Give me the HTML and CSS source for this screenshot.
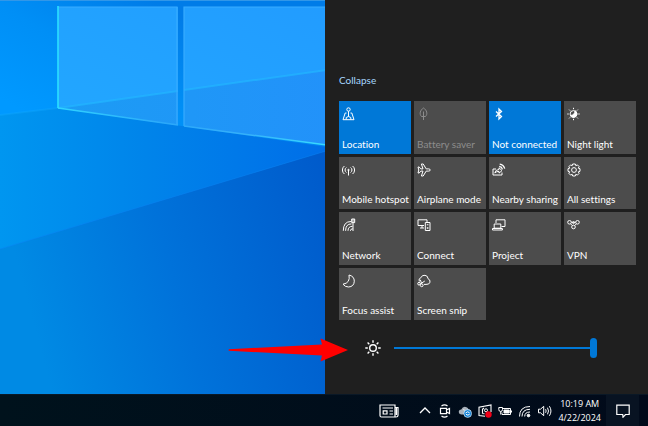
FILE: index.html
```html
<!DOCTYPE html>
<html lang="en">
<head>
<meta charset="utf-8">
<meta name="viewport" content="width=device-width, initial-scale=1">
<title>Action center</title>
<link rel="stylesheet" href="styles.css">
</head>
<body>
<main class="desktop">
  <div class="wallpaper">
    <svg class="wallpaper-art" viewBox="0 0 326 394" preserveAspectRatio="xMinYMin slice" aria-hidden="true">
      <defs>
        <linearGradient id="sky" gradientUnits="userSpaceOnUse" x1="20" y1="110" x2="100" y2="-30"><stop offset="0" stop-color="#0099ff"/><stop offset=".5" stop-color="#008ff6"/><stop offset="1" stop-color="#007ce8"/></linearGradient>
        <linearGradient id="beam" x1="0" y1="0" x2="1" y2="0"><stop offset="0" stop-color="#0096f0"/><stop offset=".45" stop-color="#0084ea"/><stop offset="1" stop-color="#006ee8"/></linearGradient>
        <linearGradient id="floor" x1="0" y1=".2" x2="1" y2="0"><stop offset="0" stop-color="#008ae4"/><stop offset=".45" stop-color="#0072da"/><stop offset="1" stop-color="#005acb"/></linearGradient>
        <linearGradient id="pane" x1="0" y1="1" x2="1" y2="0"><stop offset="0" stop-color="#22a8ff"/><stop offset="1" stop-color="#229cff"/></linearGradient>
        <linearGradient id="low" gradientUnits="userSpaceOnUse" x1="58" y1="0" x2="326" y2="0"><stop offset="0" stop-color="#1c9cf4"/><stop offset="1" stop-color="#2292fa"/></linearGradient>
        <linearGradient id="edge" gradientUnits="userSpaceOnUse" x1="58" y1="0" x2="326" y2="0"><stop offset="0" stop-color="#30d4ff"/><stop offset=".4" stop-color="#2ba8fa"/><stop offset=".7" stop-color="#36b0fa"/><stop offset="1" stop-color="#38dcff"/></linearGradient>
      </defs>
      <path d="M0 0H326V150H0Z" fill="url(#sky)"/>
      <path d="M0 115L58 108L326 147V394H0Z" fill="url(#beam)"/>
      <path d="M0 249L326 151V394H0Z" fill="url(#floor)"/>
      <path d="M0 249L326 151" stroke="#0a86f5" stroke-opacity=".5"/>
      <path d="M0 115L58 108" stroke="#10a8ff" stroke-opacity=".35" stroke-width="2"/>
      <path d="M58 7H178V125L58 108ZM184 7H326V145L184 126Z" fill="url(#pane)"/>
      <path d="M58 108L178 91V125ZM184 90L326 70V145L184 126Z" fill="url(#low)"/>
      <path d="M58 108L178 91M184 90L326 70" stroke="#22b5ff" stroke-width="2" stroke-opacity=".7"/>
      <path d="M58 7H177V125M326 7H184V126" fill="none" stroke="#38acff" stroke-width="1.2"/>
      <path d="M58 108L178 125M184 126L326 145" stroke="url(#edge)" stroke-width="1.5"/>
      <path d="M58 6V108" stroke="#2be0ff" stroke-width="1.6"/>
      <path d="M0 .5H326" stroke="#3297e8"/>
    </svg>
  </div>
  <aside class="panel" aria-label="Action center">
    <a class="collapse" href="#tiles">Collapse</a>
    <div class="tiles" id="tiles">
      <button class="tile on"><svg class="icon" viewBox="0 0 14 14"><circle cx="6.500" cy="2.500" r="1.700"/><path d="M6.500 4.200V9.500M4.500 6H3.200L1 12.700H12L9.800 6H8.500M4.200 12.500V10.500Q6.500 8.500 8.800 10.500V12.500"/></svg><span>Location</span></button>
      <button class="tile" disabled><svg class="icon" viewBox="0 0 14 14"><path d="M6.500 1C3.200 3 2 7 4.500 9.500H8.500C11 7 9.800 3 6.500 1ZM6.500 4.500V13"/></svg><span>Battery saver</span></button>
      <button class="tile on"><svg class="icon" viewBox="0 0 14 14"><path d="M4 4.400L9.500 9.500L7 12V2L9.500 4.500L4 9.600" stroke-width="1.300"/></svg><span>Not connected</span></button>
      <button class="tile"><svg class="icon" viewBox="0 0 14 14"><circle cx="6.500" cy="7" r="3.400"/><path d="M8 3.800A3.400 3.400 0 1 1 3.500 8.500Q8 8 8 3.800" fill="currentColor"/><path d="M6.500 .8V2.200M6.500 11.800V13.200M.3 7H1.700M11.300 7H12.700M2.100 2.600L3.100 3.600M9.900 10.400L10.900 11.400M2.100 11.400L3.100 10.400M9.900 3.600L10.900 2.600"/></svg><span>Night light</span></button>
      <button class="tile"><svg class="icon" viewBox="0 0 14 14"><path d="M6.500 6.500V12.500M4.400 9.500A3 3 0 0 1 4.400 4.500M8.600 9.500A3 3 0 0 0 8.600 4.500M2.400 11A5 5 0 0 1 2.400 3M10.600 11A5 5 0 0 0 10.600 3"/><circle cx="6.500" cy="7" r=".7"/></svg><span>Mobile hotspot</span></button>
      <button class="tile"><svg class="icon" viewBox="0 0 14 14"><path d="M1 4H2.200L3.800 5.900H6L4.400 1H6.200L9.200 5.900H11.700Q13.200 5.900 13.200 7T11.700 8.100H9.200L6.200 13H4.400L6 8.100H3.800L2.200 10H1L1.800 7Z"/></svg><span>Airplane mode</span></button>
      <button class="tile"><svg class="icon" viewBox="0 0 14 14"><path d="M4 6H1V12H10V9.500M2.800 10Q3.500 6.500 7 6.500V4.800L10 7.600L7 10.100V8.400Q4.500 8.300 2.800 10"/><path d="M7.200 3.300Q9.800 3.700 10.500 6.300M7.700 1.200Q11.600 1.700 12.700 5.700" stroke-width="1.300"/></svg><span>Nearby sharing</span></button>
      <button class="tile"><svg class="icon" viewBox="0 0 14 14"><path d="M5.700 1H8.300L8.800 2.700L10.400 1.900L12.100 3.600L11.300 5.200L13 5.700V8.300L11.300 8.800L12.100 10.400L10.400 12.100L8.800 11.300L8.300 13H5.700L5.200 11.300L3.600 12.100L1.900 10.400L2.700 8.800L1 8.300V5.700L2.700 5.200L1.900 3.600L3.600 1.900L5.200 2.700Z"/><circle cx="7" cy="7" r="2.400"/></svg><span>All settings</span></button>
      <button class="tile"><svg class="icon" viewBox="0 0 14 14"><path d="M1.300 12.800Q1.300 3.500 9 3.500M3.600 12.800Q3.600 5.900 9.500 5.900M6 12.800Q6 8.300 10.500 8.300M8.400 12.800Q8.400 10.800 10.800 10.800M11 5V13"/><path d="M9.700 1H12.700V4.600H9.700Z" fill="currentColor" fill-opacity=".5"/></svg><span>Network</span></button>
      <button class="tile"><svg class="icon" viewBox="0 0 14 14"><path d="M7 7.500H1V1.800H10V4M5 7.500V10M3 10H7M8.300 4.500H13V12.500H8.300Z"/><path d="M10.600 6.200V7.200M10.600 9.200V10.700" stroke-width="1.600"/></svg><span>Connect</span></button>
      <button class="tile"><svg class="icon" viewBox="0 0 14 14"><path d="M4 5V1.800H13V8.500H9.500M2.200 6H8.800V10.200H2.200ZM.5 10.500H10.400V12H.5Z"/></svg><span>Project</span></button>
      <button class="tile"><svg class="icon" viewBox="0 0 14 14"><circle cx="2.500" cy="4.300" r="1.800"/><circle cx="10.500" cy="4.300" r="1.800"/><circle cx="6.500" cy="9" r="1.800"/><circle cx="6.500" cy="4.600" r="1"/><path d="M4.300 4.300H8.700M3.600 5.800L5.300 7.600M9.400 5.800L7.700 7.600"/></svg><span>VPN</span></button>
      <button class="tile"><svg class="icon" viewBox="0 0 14 14"><path d="M7 1Q12.300 2.300 12.300 7.200Q12 12.700 6.500 13Q3 13 1 10.200Q8.500 9 7 1Z"/></svg><span>Focus assist</span></button>
      <button class="tile"><svg class="icon" viewBox="0 0 14 14"><path d="M2.300 7.500Q1.200 4.500 3.800 3.800Q5 .8 8 1.300Q11 1.800 11 4.700Q13.400 5.500 13 8.200Q12.300 10.700 9 10.400H7"/><path d="M3.300 5.800L4.700 9.700M7.800 7L3.300 10"/><circle cx="4.700" cy="11.300" r="1.400"/><circle cx="2" cy="9.700" r="1.300"/></svg><span>Screen snip</span></button>
    </div>
    <div class="brightness">
      <svg class="pointer" viewBox="0 0 120 24" aria-hidden="true"><path d="M1 11.200L94 6.500L92.500 .5L120 12L92.500 23.500L94 17.500L1 12.800Q0 12 1 11.200Z" fill="#f00"/></svg>
      <label for="level" aria-label="Brightness"><svg class="sun" viewBox="0 0 16 16"><circle cx="8" cy="8" r="3.300"/><path d="M8 .3V2.800M8 13.200V15.700M.3 8H2.800M13.200 8H15.700M2.600 2.600L4.300 4.300M11.700 11.700L13.400 13.400M2.600 13.400L4.300 11.700M11.700 4.300L13.400 2.600"/></svg></label>
      <input class="level" id="level" type="range" min="0" max="100" value="100">
    </div>
  </aside>
</main>
<footer class="taskbar">
  <button class="task news" aria-label="News"><svg viewBox="0 0 20 14"><path d="M1 1H16V13H2.500Q1 13 1 11.500ZM16 3.500H19V11.500Q19 13 17 13H15M17.400 4V11" stroke-width="1.200"/><path d="M3.500 4H14M10.500 7H14M10.500 10H14" stroke-width="1.200"/><path d="M4.200 6.800H8V10H4.200Z" stroke-width="1.200"/></svg></button>
  <div class="tray">
    <button class="task" aria-label="Show hidden icons"><svg viewBox="0 0 14 14"><path d="M2 9L7 4L12 9" stroke-width="1.300"/></svg></button>
    <button class="task" aria-label="Meet now"><svg viewBox="0 0 14 14"><path d="M2.500 4.300H8.500V9.700H2.500ZM8.500 6L11.500 4.500V9.500L8.500 8M3.500 2Q6.500-.3 9.500 2M3.500 12Q6.500 14.300 9.500 12" stroke-width="1.200"/></svg></button>
    <button class="task" aria-label="OneDrive"><svg viewBox="0 0 14 14"><path d="M3 10.500Q.5 10 .7 7.700Q1 5.500 3.300 5.500Q5 1.800 8.500 3.200Q10 3.900 10.500 5.200Q13.300 5.500 13 9V10.500Z" fill="#aab2ba" stroke="none"/><path d="M5 5.500L11 8" stroke="#e2e6ea"/><circle cx="9.700" cy="9.500" r="3.900" fill="#1584d8" stroke="#fff" stroke-width=".6"/><path d="M7.600 9Q9.500 6.700 11.500 8.700M11.800 10Q10 12.200 8 10.300" stroke-width="1"/></svg></button>
    <button class="task" aria-label="Screen capture"><svg viewBox="0 0 14 14"><path d="M7 12.200L1 11.500V3.200L13 1V8M4.500 9.500V5.200L6 4M4.500 9.500L6.500 9.800" stroke-width="1.100"/><circle cx="8" cy="6.300" r="1.500"/><circle cx="10.500" cy="10.500" r="3.200" fill="#f00018" stroke="none"/></svg></button>
    <button class="task" aria-label="Battery"><svg viewBox="0 0 14 14"><path d="M4.500 4.500H12.500V10.500H4V8.500M13.500 6.500V8.500"/><path d="M6 6H11.200V9H6Z" fill="currentColor"/><path d="M.8 3.500H4.500V5.500Q4.500 7.500 2.700 7.500Q.8 7.500 .8 5.500ZM2.700 7.500V10.500"/></svg></button>
    <button class="task" aria-label="Wi-Fi"><svg viewBox="0 0 14 14"><path d="M1.500 12.500Q1.500 2.500 12 2.500M4 12.500Q4 5.300 12 5.300M6.700 12.500Q6.700 8 12 8"/><circle cx="10.500" cy="11.500" r="1.300" fill="currentColor"/></svg></button>
    <button class="task" aria-label="Volume"><svg viewBox="0 0 14 14"><path d="M.5 5.200H2.500L5.700 2.300V11.700L2.500 8.800H.5ZM7.600 5.200Q8.700 7 7.600 8.800M9.500 3.700Q11.500 7 9.500 10.300M11.400 2.200Q14.500 7 11.400 11.800"/></svg></button>
  </div>
  <button class="clock"><time datetime="2024-04-22T10:19">10:19 AM<br>4/22/2024</time></button>
  <button class="notify" aria-label="Notifications"><svg viewBox="0 0 14 14"><path d="M.8 1.200H13.200V10.500H9.500L7 13.200L6.700 10.500H.8Z" stroke-width="1.200"/></svg></button>
</footer>
</body>
</html>
```
FILE: styles.css
```css
* {
  box-sizing: border-box;
}

body {
  margin: 0;
  min-height: 100vh;
  display: flex;
  flex-direction: column;
  background: #010c1a;
  color: #fff;
  font: 10px/14px Lato, "Open Sans", sans-serif;
  font-variant-ligatures: none;
}

button {
  margin: 0;
  padding: 0;
  border: 0;
  background: none;
  color: inherit;
  font: inherit;
}

svg {
  display: block;
  fill: none;
  stroke: currentColor;
  stroke-width: 1;
}

.desktop {
  flex: 1;
  display: grid;
  grid-template-columns: minmax(0, 1fr) 323px;
}

.wallpaper {
  position: relative;
  overflow: hidden;
  background: #0078e0;
}

.wallpaper-art {
  position: absolute;
  inset: 0;
  width: 100%;
  height: 100%;
  stroke: none;
}

.panel {
  padding: 73px 12px 34px 14px;
  background: #1f1f1f;
}

.collapse {
  display: block;
  width: max-content;
  color: #a6d8ff;
  text-decoration: none;
}

.tiles {
  display: grid;
  grid-template-columns: repeat(4, 1fr);
  grid-template-rows: repeat(4, 1fr);
  gap: 3px;
  height: 219px;
  margin-top: 14px;
}

.tile {
  display: flex;
  flex-direction: column;
  justify-content: space-between;
  align-items: flex-start;
  min-width: 0;
  padding: 6px 0 3px 3px;
  background: #4c4c4c;
  white-space: nowrap;
}

.tile.on {
  background: #0078d7;
}

.tile:disabled {
  color: #8c8c8c;
}

.icon {
  width: 14px;
  height: 14px;
}

.brightness {
  position: relative;
  display: flex;
  align-items: center;
  gap: 13px;
  height: 20px;
  margin: 18px 39px 0 26px;
}

.pointer {
  position: absolute;
  right: calc(100% + 17px);
  top: 0;
  width: 120px;
  height: 24px;
  stroke: none;
}

.sun {
  width: 16px;
  height: 16px;
  stroke-width: 1.4px;
}

.level {
  flex: 1;
  min-width: 0;
  height: 20px;
  margin: 0;
  appearance: none;
  background: linear-gradient(#0078d7, #0078d7) center / 100% 2px no-repeat;
}

.level::-webkit-slider-thumb {
  appearance: none;
  width: 7px;
  height: 20px;
  border-radius: 4px;
  background: #0078d7;
}

.taskbar {
  display: flex;
  align-items: stretch;
  justify-content: flex-end;
  height: 32px;
  padding-right: 9px;
  border-top: 1px solid #0a1826;
  background: linear-gradient(90deg, #00121c, #010a1a);
}

.task {
  display: flex;
  align-items: center;
}

.task svg {
  width: 14px;
  height: 14px;
}

.news {
  margin-right: 19px;
}

.news svg {
  width: 20px;
}

.tray {
  display: flex;
  gap: 6px;
}

.clock {
  margin: 0 5px 0 6px;
  font: 9px/14px "Open Sans", sans-serif;
  text-align: center;
}

.notify {
  display: grid;
  place-items: center;
  width: 33px;
  background: #081322;
}

.notify svg {
  width: 14px;
  height: 14px;
}
```
